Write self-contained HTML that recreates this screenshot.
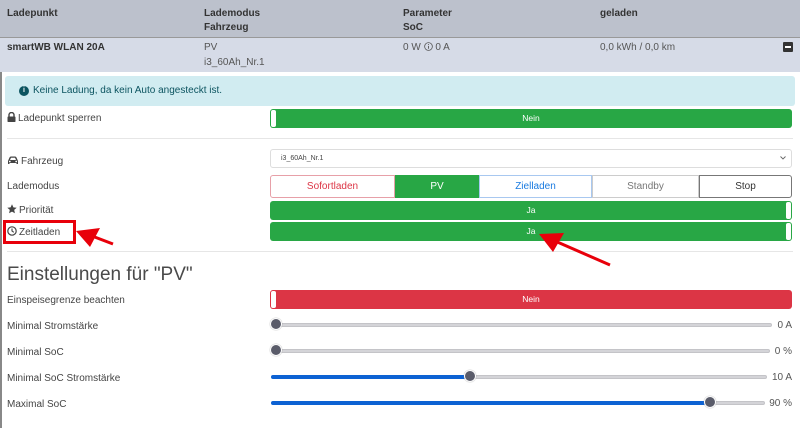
<!DOCTYPE html>
<html><head><meta charset="utf-8"><style>
*{box-sizing:border-box;margin:0;padding:0}
body{width:800px;height:428px;overflow:hidden;background:#fff;font-family:"Liberation Sans",sans-serif;font-size:10px;color:#444;position:relative}
.a{position:absolute;white-space:nowrap}
.b{font-weight:bold;color:#333}
.bar{position:absolute;left:270px;width:522px;height:19px;border-radius:3px;color:#fff;font-size:8.5px;text-align:center;line-height:19px}
.g{background:#28a745}.r{background:#dc3545}
.knob{position:absolute;left:1px;top:1px;width:5px;height:17px;background:#fff;border-radius:2px}
.lbl{position:absolute;left:7px;font-size:10px;color:#444;white-space:nowrap}
.lbl svg{vertical-align:-1px;margin-right:2px}
.trk{position:absolute;height:4px;background:#d4d4d8;border-radius:2px;border:1px solid #c4c4c8}
.fill{position:absolute;height:4px;background:#0d62d3;border-radius:2px}
.th{position:absolute;width:12px;height:12px;border-radius:6px;background:#5a5c6a;border:1px solid #fff;box-shadow:0 0 1px #888}
.val{position:absolute;right:8px;font-size:10px;color:#555}
.mb{position:absolute;top:175px;height:23px;line-height:22px;text-align:center;font-size:10px;border:1px solid}
</style></head><body>
<div class="a" style="left:0;top:0;width:2px;height:428px;background:#888"></div>
<div class="a" style="left:0;top:0;width:800px;height:37px;background:#bcc1cc"></div>
<div class="a" style="left:0;top:37px;width:800px;height:1px;background:#999"></div>
<div class="a" style="left:0;top:38px;width:800px;height:34px;background:#d6dbe7"></div>
<div class="a b" style="left:7px;top:8px">Ladepunkt</div>
<div class="a b" style="left:204px;top:8px">Lademodus</div>
<div class="a b" style="left:204px;top:22px">Fahrzeug</div>
<div class="a b" style="left:403px;top:8px">Parameter</div>
<div class="a b" style="left:403px;top:22px">SoC</div>
<div class="a b" style="left:600px;top:8px">geladen</div>
<div class="a b" style="left:7px;top:42px">smartWB WLAN 20A</div>
<div class="a" style="left:204px;top:42px;color:#555">PV</div>
<div class="a" style="left:204px;top:57px;color:#555">i3_60Ah_Nr.1</div>
<div class="a" style="left:403px;top:42px;color:#555">0 W <svg width="9" height="9" viewBox="0 0 10 10" style="vertical-align:-1px"><circle cx="5" cy="5" r="4.3" fill="none" stroke="#555" stroke-width="0.9"/><path d="M5 4.3V7.5" stroke="#555"/><circle cx="5" cy="2.8" r="0.6" fill="#555"/></svg> 0 A</div>
<div class="a" style="left:600px;top:42px;color:#555">0,0 kWh / 0,0 km</div>
<div class="a" style="left:783px;top:42px;width:10px;height:10px;background:#333;border-radius:1px"><div style="position:absolute;left:2px;top:4px;width:6px;height:2px;background:#fff"></div></div>
<div class="a" style="left:5px;top:76px;width:790px;height:30px;background:#d1ecf1;border-radius:3px"></div>
<div class="a" style="left:19px;top:86px;width:10px;height:10px;border-radius:5px;background:#0c5460;color:#fff;font-size:7px;text-align:center;line-height:10px;font-weight:bold">i</div>
<div class="a" style="left:33px;top:85px;color:#0c5460">Keine Ladung, da kein Auto angesteckt ist.</div>
<div class="lbl" style="top:112px"><svg width="9" height="10" viewBox="0 0 9 10"><path d="M2 4.5V3a2.5 2.5 0 0 1 5 0v1.5" fill="none" stroke="#444" stroke-width="1.4"/><rect x="0.5" y="4.5" width="8" height="5.5" rx="0.8" fill="#444"/></svg>Ladepunkt sperren</div>
<div class="bar g" style="top:109px">Nein<div class="knob"></div></div>
<div class="a" style="left:7px;top:138px;width:786px;height:1px;background:#e6e6e6"></div>
<div class="lbl" style="top:156px"><svg width="12" height="9" viewBox="0 0 12 9"><path d="M1 5L2.5 1.5Q3 0.5 4 0.5H8Q9 0.5 9.5 1.5L11 5V8H9.5V7H2.5V8H1Z" fill="#444"/><path d="M3 4L4 1.8H8L9 4Z" fill="#fff"/><circle cx="2.8" cy="5.5" r="0.9" fill="#fff"/><circle cx="9.2" cy="5.5" r="0.9" fill="#fff"/></svg>Fahrzeug</div>
<div class="a" style="left:270px;top:149px;width:522px;height:19px;border:1px solid #ddd;border-radius:3px;font-size:7px;line-height:17px;padding-left:10px;color:#444">i3_60Ah_Nr.1<svg style="position:absolute;right:5px;top:6px" width="6" height="4" viewBox="0 0 6 4"><path d="M0.5 0.5L3 3L5.5 0.5" fill="none" stroke="#666" stroke-width="0.9"/></svg></div>
<div class="lbl" style="top:181px">Lademodus</div>
<div class="mb" style="left:270px;width:125px;border-color:#e7a0a8;color:#dc3545;border-radius:3px 0 0 3px">Sofortladen</div>
<div class="mb" style="left:395px;width:84px;background:#28a745;border-color:#28a745;color:#fff">PV</div>
<div class="mb" style="left:479px;width:113px;border-color:#a8c8f0;color:#1a7be0">Zielladen</div>
<div class="mb" style="left:592px;width:107px;border-color:#ccc;color:#777">Standby</div>
<div class="mb" style="left:699px;width:93px;border-color:#777;color:#333;border-radius:0 3px 3px 0">Stop</div>
<div class="lbl" style="top:204px"><svg width="10" height="10" viewBox="0 0 10 10"><path d="M5 0.3L6.4 3.4L9.7 3.7L7.2 5.9L7.9 9.3L5 7.6L2.1 9.3L2.8 5.9L0.3 3.7L3.6 3.4Z" fill="#444"/></svg>Priorität</div>
<div class="bar g" style="top:201px">Ja<div class="knob" style="left:auto;right:1px"></div></div>
<div class="lbl" style="top:226px"><svg width="10" height="10" viewBox="0 0 10 10"><circle cx="5" cy="5" r="4.2" fill="none" stroke="#444" stroke-width="1.2"/><path d="M5 2.5V5L6.8 6.3" fill="none" stroke="#444" stroke-width="1.1"/></svg>Zeitladen</div>
<div class="bar g" style="top:222px">Ja<div class="knob" style="left:auto;right:1px"></div></div>
<div class="a" style="left:7px;top:251px;width:786px;height:1px;background:#e6e6e6"></div>
<div class="a" style="left:7px;top:264px;font-size:19px;color:#4a4a4a">Einstellungen für "PV"</div>
<div class="lbl" style="top:295px">Einspeisegrenze beachten</div>
<div class="bar r" style="top:290px">Nein<div class="knob"></div></div>
<div class="lbl" style="top:321px">Minimal Stromstärke</div>
<div class="trk" style="left:272px;top:323px;width:500px"></div><div class="th" style="left:270px;top:318px"></div><div class="val" style="top:320px">0 A</div>
<div class="lbl" style="top:347px">Minimal SoC</div>
<div class="trk" style="left:272px;top:349px;width:498px"></div><div class="th" style="left:270px;top:344px"></div><div class="val" style="top:346px">0 %</div>
<div class="lbl" style="top:373px">Minimal SoC Stromstärke</div>
<div class="trk" style="left:272px;top:375px;width:495px"></div><div class="fill" style="left:271px;top:375px;width:200px"></div><div class="th" style="left:464px;top:370px"></div><div class="val" style="top:372px">10 A</div>
<div class="lbl" style="top:399px">Maximal SoC</div>
<div class="trk" style="left:272px;top:401px;width:493px"></div><div class="fill" style="left:271px;top:401px;width:440px"></div><div class="th" style="left:704px;top:396px"></div><div class="val" style="top:398px">90 %</div>
<svg class="a" style="left:0;top:0" width="800" height="428">
<rect x="4.5" y="221.5" width="70" height="21" fill="none" stroke="#e8000a" stroke-width="3"/>
<line x1="113" y1="244" x2="92" y2="236" stroke="#e8000a" stroke-width="3"/>
<polygon points="76,231 100,228 90,247" fill="#e8000a"/>
<line x1="610" y1="265" x2="555" y2="241" stroke="#e8000a" stroke-width="3"/>
<polygon points="539,234 564,233 553,252" fill="#e8000a"/>
</svg>
</body></html>
